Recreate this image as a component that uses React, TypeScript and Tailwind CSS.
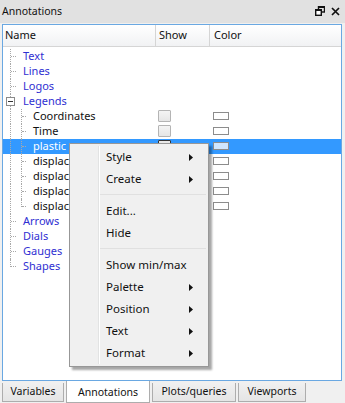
import React from "react";

const font = { fontFamily: '"Noto Sans", "Open Sans", sans-serif' };

type Row = {
  label: string;
  level: 0 | 1;
  expander?: boolean;
  selected?: boolean;
  check?: boolean;
  color?: boolean;
  last?: boolean;
  lastChild?: boolean;
};

const rows: Row[] = [
  { label: "Text", level: 0 },
  { label: "Lines", level: 0 },
  { label: "Logos", level: 0 },
  { label: "Legends", level: 0, expander: true },
  { label: "Coordinates", level: 1, check: true, color: true },
  { label: "Time", level: 1, check: true, color: true },
  { label: "plastic", level: 1, selected: true, check: true, color: true },
  { label: "displacement", level: 1, check: true, color: true },
  { label: "displacement", level: 1, check: true, color: true },
  { label: "displacement", level: 1, check: true, color: true },
  { label: "displacement", level: 1, check: true, color: true, lastChild: true },
  { label: "Arrows", level: 0 },
  { label: "Dials", level: 0 },
  { label: "Gauges", level: 0 },
  { label: "Shapes", level: 0, last: true },
];

function TreeRow({ r }: { r: Row }) {
  const textCls = r.selected
    ? "text-white"
    : r.level === 0
    ? "text-[#2f2fd2]"
    : "text-[#111]";
  return (
    <div
      className={`flex h-[15px] items-center text-[11px] leading-none ${
        r.selected ? "bg-[#3399ff]" : ""
      }`}
    >
      <div className="relative h-full w-[153px] shrink-0 overflow-hidden">
        <div
          className={`absolute left-[7px] top-0 w-0 border-l border-dotted border-[#a8a8a8] ${
            r.last ? "h-[8px]" : "h-full"
          }`}
        />
        {r.level === 0 && !r.expander && (
          <div className="absolute left-[8px] top-[7px] h-0 w-[5px] border-t border-dotted border-[#a8a8a8]" />
        )}
        {r.expander && (
          <div className="absolute left-[3px] top-[3px] flex h-[9px] w-[9px] items-center justify-center border border-[#8a8a8a] bg-white">
            <div className="h-px w-[5px] bg-[#333]" />
          </div>
        )}
        {r.level === 1 && (
          <>
            <div
              className={`absolute left-[18px] top-0 w-0 border-l border-dotted border-[#a8a8a8] ${
                r.lastChild ? "h-[8px]" : "h-full"
              }`}
            />
            <div className="absolute left-[19px] top-[7px] h-0 w-[4px] border-t border-dotted border-[#a8a8a8]" />
          </>
        )}
        <span
          className={`absolute top-[1px] whitespace-nowrap ${textCls} ${
            r.level === 0 ? "left-[20px]" : "left-[30px]"
          }`}
        >
          {r.label}
        </span>
      </div>
      <div className="flex h-full w-[54px] shrink-0 items-center pl-[2px]">
        {r.check && (
          <div
            className={`h-[12px] w-[13px] rounded-[1px] border ${
              r.selected
                ? "border-[#333] bg-[#e8e8e8]"
                : "border-[#b4b4b4] bg-gradient-to-b from-[#f4f4f4] to-[#e6e6e6]"
            }`}
          />
        )}
      </div>
      <div className="flex h-full flex-1 items-center pl-[3px]">
        {r.color && (
          <div
            className={`h-[8px] w-[16px] border border-[#8c8c8c] ${
              r.selected ? "bg-[#cfe6ff]" : "bg-white"
            }`}
          />
        )}
      </div>
    </div>
  );
}

function Arrow() {
  return (
    <svg width="4" height="7" viewBox="0 0 4 7" className="shrink-0">
      <path d="M0 0 L4 3.5 L0 7 Z" fill="#111" />
    </svg>
  );
}

function MenuItem({ label, sub }: { label: string; sub?: boolean }) {
  return (
    <div className="flex h-[22px] items-center pl-[36px] pr-[15px] text-[11.5px] text-[#111]">
      <span className="flex-1 whitespace-nowrap">{label}</span>
      {sub && <Arrow />}
    </div>
  );
}

function Sep() {
  return (
    <div className="flex h-[10px] items-center pl-[30px] pr-[2px]">
      <div className="h-[2px] w-full border-t border-[#e0e0e0] border-b-white" />
    </div>
  );
}

function ContextMenu() {
  return (
    <div className="absolute left-[69px] top-[143px] w-[140px] border border-[#979797] bg-[#f0f0f0] py-[2px] shadow-[3px_3px_2px_rgba(0,0,0,0.35)]">
      <div className="absolute bottom-[2px] left-[28px] top-[2px] w-px bg-[#e2e3e3]" />
      <div className="absolute bottom-[2px] left-[29px] top-[2px] w-px bg-white" />
      <div className="relative">
        <MenuItem label="Style" sub />
        <MenuItem label="Create" sub />
        <Sep />
        <MenuItem label="Edit..." />
        <MenuItem label="Hide" />
        <Sep />
        <MenuItem label="Show min/max" />
        <MenuItem label="Palette" sub />
        <MenuItem label="Position" sub />
        <MenuItem label="Text" sub />
        <MenuItem label="Format" sub />
      </div>
    </div>
  );
}

function Tab({ label, active }: { label: string; active?: boolean }) {
  return (
    <div
      className={`flex items-center justify-center border border-t-0 text-[10.5px] text-[#111] ${
        active
          ? "-mt-[2px] h-[22px] border-[#adadad] bg-white pt-[2px]"
          : "h-[19px] border-[#adadad] bg-gradient-to-b from-[#f0f0f0] to-[#e5e5e5]"
      }`}
    >
      {label}
    </div>
  );
}

export default function App() {
  return (
    <div
      className="relative flex h-[403px] w-[345px] flex-col overflow-hidden bg-[#f0f0f0]"
      style={font}
    >
      <div className="flex h-[23px] items-center justify-between bg-[#e1e1e1] pl-[2px] pr-[5px]">
        <span className="text-[10.5px] text-[#111]">Annotations</span>
        <div className="flex items-center gap-[6px]">
          <svg width="10" height="10" viewBox="0 0 10 10">
            <rect x="3.5" y="0.5" width="6" height="5.5" fill="none" stroke="#111" strokeWidth="1.4" />
            <rect x="3" y="0" width="7" height="2" fill="#111" />
            <rect x="0.7" y="3.7" width="5.6" height="5.6" fill="#fff" stroke="#111" strokeWidth="1.4" />
            <rect x="0" y="3" width="7" height="2" fill="#111" />
          </svg>
          <svg width="9" height="9" viewBox="0 0 9 9">
            <path d="M1 1 L8 8 M8 1 L1 8" stroke="#111" strokeWidth="1.7" />
          </svg>
        </div>
      </div>
      <div className="ml-[2px] mt-px flex h-[359px] w-[340px] flex-col border border-[#6aa8e2] bg-white">
        <div className="flex h-[22px] border-b border-[#d5d5d5] bg-gradient-to-b from-white to-[#f1f2f4] text-[11px] text-[#111]">
          <div className="flex w-[153px] items-center border-r border-[#d5d5d5] pl-[2px]">Name</div>
          <div className="flex w-[54px] items-center border-r border-[#d5d5d5] pl-[3px]">Show</div>
          <div className="flex flex-1 items-center pl-[4px]">Color</div>
        </div>
        <div className="pt-[2px]">
          {rows.map((r, i) => (
            <TreeRow key={i} r={r} />
          ))}
        </div>
      </div>
      <div className="grid grid-cols-[62px_84px_84px_68px] gap-[2px] pl-[2px] pt-[2px]">
        <Tab label="Variables" />
        <Tab label="Annotations" active />
        <Tab label="Plots/queries" />
        <Tab label="Viewports" />
      </div>
      <ContextMenu />
    </div>
  );
}
